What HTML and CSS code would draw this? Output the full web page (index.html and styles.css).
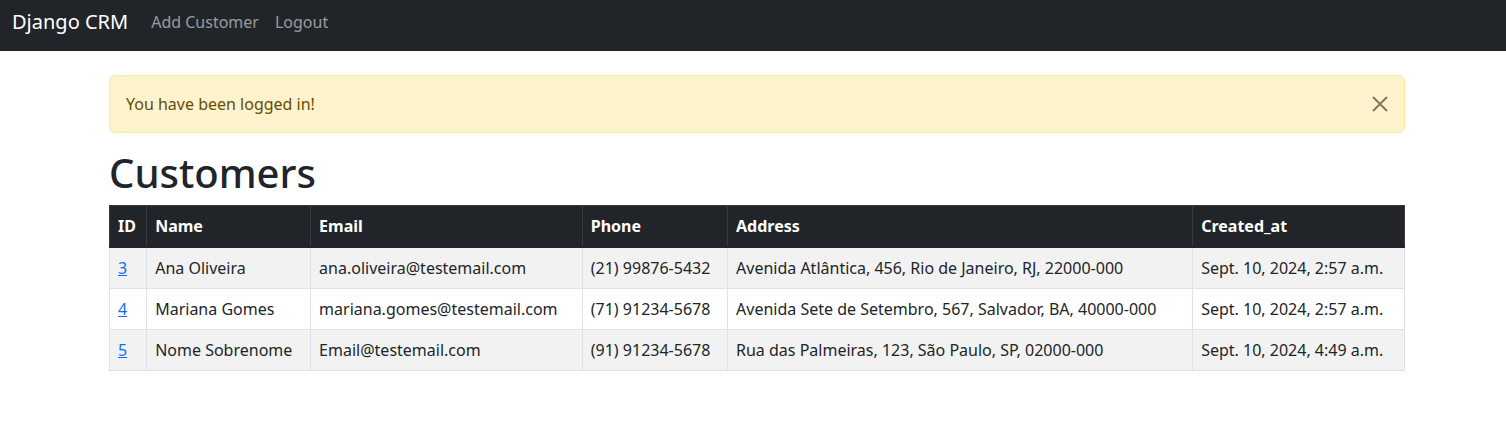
FILE: index.html
```html
<!DOCTYPE html>
<html lang="en">
<head>
<meta charset="utf-8">
<title>Django CRM</title>
<link rel="stylesheet" href="styles.css">
</head>
<body>
<nav class="navbar">
  <a class="brand" href="#">Django CRM</a>
  <ul class="nav-links">
    <li><a href="#">Add Customer</a></li>
    <li><a href="#">Logout</a></li>
  </ul>
</nav>
<main class="container">
  <div class="alert">
    <span>You have been logged in!</span>
    <button class="btn-close" type="button" aria-label="Close">
      <svg viewBox="0 0 16 16" width="16" height="16"><path d="M1 1L15 15M15 1L1 15" stroke="#000" stroke-width="2" fill="none"/></svg>
    </button>
  </div>
  <h1 class="title">Customers</h1>
  <table class="table">
    <thead>
      <tr><th>ID</th><th>Name</th><th>Email</th><th>Phone</th><th>Address</th><th>Created_at</th></tr>
    </thead>
    <tbody>
      <tr class="striped"><td><a href="#">3</a></td><td>Ana Oliveira</td><td>ana.oliveira@testemail.com</td><td>(21) 99876-5432</td><td>Avenida Atlântica, 456, Rio de Janeiro, RJ, 22000-000</td><td>Sept. 10, 2024, 2:57 a.m.</td></tr>
      <tr><td><a href="#">4</a></td><td>Mariana Gomes</td><td>mariana.gomes@testemail.com</td><td>(71) 91234-5678</td><td>Avenida Sete de Setembro, 567, Salvador, BA, 40000-000</td><td>Sept. 10, 2024, 2:57 a.m.</td></tr>
      <tr class="striped"><td><a href="#">5</a></td><td>Nome Sobrenome</td><td>Email@testemail.com</td><td>(91) 91234-5678</td><td>Rua das Palmeiras, 123, São Paulo, SP, 02000-000</td><td>Sept. 10, 2024, 4:49 a.m.</td></tr>
    </tbody>
  </table>
</main>
</body>
</html>
```
FILE: styles.css
```css
* { box-sizing: border-box; }
body {
  margin: 0;
  font-family: "Noto Sans", "Liberation Sans", sans-serif;
  font-size: 16px;
  line-height: 1.5;
  color: #212529;
  background: #fff;
}
.navbar {
  background: #212529;
  height: 51px;
  display: flex;
  align-items: center;
  padding: 0 12px 8px;
}
.brand {
  color: #fff;
  font-size: 20px;
  text-decoration: none;
  margin-right: 15px;
  line-height: 30px;
}
.nav-links {
  list-style: none;
  margin: 0;
  padding: 0;
  display: flex;
}
.nav-links a {
  display: block;
  padding: 8px;
  color: rgba(255,255,255,.55);
  text-decoration: none;
}
.container {
  width: 1296px;
  margin-left: calc(50% - 644px);
  padding-top: 24px;
}
.alert {
  position: relative;
  background: #fff3cd;
  border: 1px solid #ffe69c;
  color: #664d03;
  border-radius: 6px;
  padding: 16px 48px 16px 16px;
  margin-bottom: 16px;
}
.btn-close {
  position: absolute;
  top: 0;
  right: 0;
  padding: 20px 16px;
  border: 0;
  background: transparent;
  opacity: .5;
  line-height: 0;
  cursor: pointer;
}
.btn-close svg { display: block; }
.title {
  font-size: 40px;
  font-weight: 500;
  line-height: 1.2;
  margin: 0 0 8px;
}
.table {
  width: 100%;
  border-collapse: collapse;
  border: 1px solid #dee2e6;
}
.table th, .table td {
  padding: 8px;
  text-align: left;
  vertical-align: top;
  border: 1px solid #dee2e6;
}
.table thead th {
  background: #212529;
  color: #fff;
  font-weight: 700;
  border-color: #373b3e;
}
.table tbody tr:first-child td { border-top: 2px solid #212529; }
.table tbody tr.striped td { background: #f2f2f2; }
.table a { color: #0d6efd; }
```
